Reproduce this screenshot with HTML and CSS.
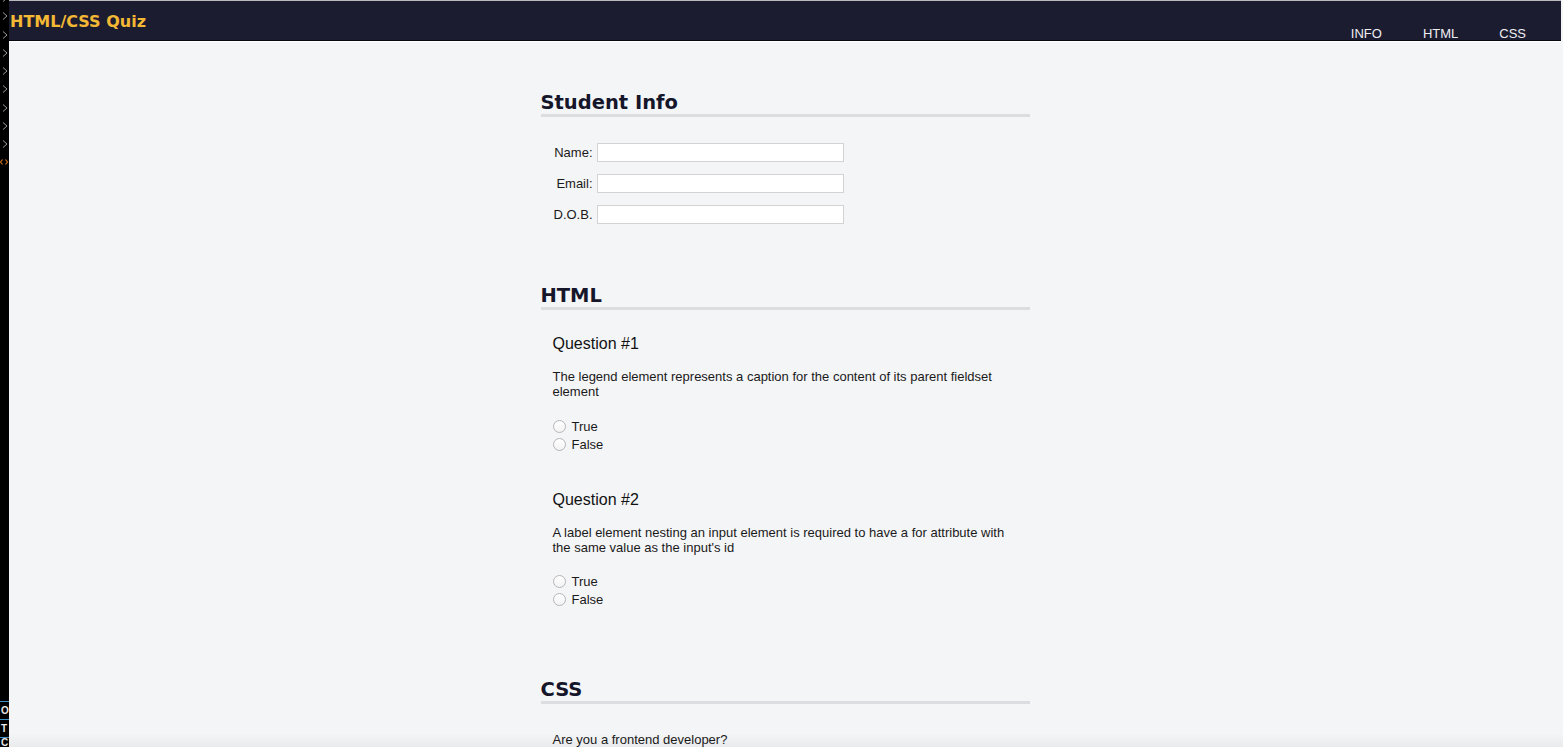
FILE: index.html
```html
<!DOCTYPE html>
<html lang="en">
<head>
<meta charset="utf-8">
<title>HTML/CSS Quiz</title>
<link rel="stylesheet" href="styles.css">
</head>
<body>
<aside class="gutter">
  <ul class="gutter-marks">
    <li class="mark"><svg width="6" height="8" viewBox="0 0 6 8"><polyline points="1,0.5 5,4 1,7.5" fill="none" stroke="#9a9a9a" stroke-width="1"/></svg></li>
    <li class="mark"><svg width="6" height="8" viewBox="0 0 6 8"><polyline points="1,0.5 5,4 1,7.5" fill="none" stroke="#9a9a9a" stroke-width="1"/></svg></li>
    <li class="mark"><svg width="6" height="8" viewBox="0 0 6 8"><polyline points="1,0.5 5,4 1,7.5" fill="none" stroke="#9a9a9a" stroke-width="1"/></svg></li>
    <li class="mark"><svg width="6" height="8" viewBox="0 0 6 8"><polyline points="1,0.5 5,4 1,7.5" fill="none" stroke="#9a9a9a" stroke-width="1"/></svg></li>
    <li class="mark"><svg width="6" height="8" viewBox="0 0 6 8"><polyline points="1,0.5 5,4 1,7.5" fill="none" stroke="#9a9a9a" stroke-width="1"/></svg></li>
    <li class="mark"><svg width="6" height="8" viewBox="0 0 6 8"><polyline points="1,0.5 5,4 1,7.5" fill="none" stroke="#9a9a9a" stroke-width="1"/></svg></li>
    <li class="mark"><svg width="6" height="8" viewBox="0 0 6 8"><polyline points="1,0.5 5,4 1,7.5" fill="none" stroke="#9a9a9a" stroke-width="1"/></svg></li>
    <li class="mark"><svg width="6" height="8" viewBox="0 0 6 8"><polyline points="1,0.5 5,4 1,7.5" fill="none" stroke="#9a9a9a" stroke-width="1"/></svg></li>
    <li class="mark"><svg width="6" height="8" viewBox="0 0 6 8"><polyline points="1,0.5 5,4 1,7.5" fill="none" stroke="#9a9a9a" stroke-width="1"/></svg></li>
    <li class="mark mark-tag"><svg width="8" height="6" viewBox="0 0 8 6"><polyline points="2.5,0.5 0.5,3 2.5,5.5" fill="none" stroke="#d4761c" stroke-width="1.2"/><polyline points="5.5,0.5 7.5,3 5.5,5.5" fill="none" stroke="#d4761c" stroke-width="1.2"/></svg></li>
  </ul>
  <ul class="gutter-tabs">
    <li class="tab">O</li>
    <li class="tab">T</li>
    <li class="tab tab-last">C</li>
  </ul>
</aside>

<div class="page">
  <header class="topbar">
    <h1 class="brand">HTML/CSS Quiz</h1>
    <nav class="nav">
      <a class="nav-link" href="#info">INFO</a>
      <a class="nav-link" href="#html">HTML</a>
      <a class="nav-link" href="#css">CSS</a>
    </nav>
  </header>

  <main class="quiz">
    <section class="section" id="info">
      <h2 class="section-title">Student Info</h2>
      <div class="info-grid">
        <label class="info-label" for="name">Name:</label>
        <input class="info-input" type="text" id="name">
        <label class="info-label" for="email">Email:</label>
        <input class="info-input" type="text" id="email">
        <label class="info-label" for="dob">D.O.B.</label>
        <input class="info-input" type="text" id="dob">
      </div>
    </section>

    <section class="section" id="html">
      <h2 class="section-title">HTML</h2>
      <div class="question">
        <h3 class="question-title">Question #1</h3>
        <p class="question-text">The legend element represents a caption for the content of its parent fieldset element</p>
        <div class="options">
          <label class="option"><input class="radio" type="radio" name="q1">True</label>
          <label class="option"><input class="radio" type="radio" name="q1">False</label>
        </div>
      </div>
      <div class="question">
        <h3 class="question-title">Question #2</h3>
        <p class="question-text">A label element nesting an input element is required to have a for attribute with the same value as the input's id</p>
        <div class="options">
          <label class="option"><input class="radio" type="radio" name="q2">True</label>
          <label class="option"><input class="radio" type="radio" name="q2">False</label>
        </div>
      </div>
    </section>

    <section class="section" id="css">
      <h2 class="section-title">CSS</h2>
      <p class="question-text intro">Are you a frontend developer?</p>
    </section>
  </main>
</div>
<div class="fade"></div>
</body>
</html>
```

FILE: styles.css
```css
* { box-sizing: border-box; }

html, body {
  margin: 0;
  padding: 0;
  height: 100%;
  overflow: hidden;
}

body {
  display: flex;
  background: #f4f5f7;
  font-family: "Liberation Sans", Arial, sans-serif;
  color: #1a1a1a;
}

/* left editor gutter */
.gutter {
  width: 9px;
  flex: 0 0 9px;
  height: 100vh;
  background: #000;
  display: flex;
  flex-direction: column;
  justify-content: space-between;
  overflow: hidden;
}

.gutter-marks {
  list-style: none;
  margin: -11px 0 0;
  padding: 0;
}

.mark {
  height: 18.25px;
  display: flex;
  align-items: center;
  padding-left: 2px;
}

.mark svg { display: block; }

.mark-tag { padding-left: 0; }

.gutter-tabs {
  list-style: none;
  margin: 0;
  padding: 0;
}

.tab {
  height: 18px;
  border-top: 1px solid #3d8fc4;
  color: #e6e6e6;
  font-size: 10px;
  font-weight: bold;
  line-height: 17px;
  padding-left: 1px;
  overflow: hidden;
}

.tab-last {
  height: 10px;
  line-height: 9px;
}

/* page */
.page {
  flex: 1;
  margin-right: 2px;
  min-width: 0;
}

.topbar {
  height: 41px;
  background: #1c1c31;
  border-top: 1px solid #b9b9bd;
  border-bottom: 1px solid #07070f;
  box-shadow: 0 1px 0 #ffffff;
  display: flex;
  justify-content: space-between;
}

.brand {
  margin: 0;
  padding: 11px 0 0 1px;
  font-family: "DejaVu Sans", Verdana, sans-serif;
  font-weight: bold;
  font-size: 16px;
  line-height: 19px;
  color: #f4b934;
}

.nav {
  display: flex;
  gap: 41px;
  padding: 26px 35px 0 0;
}

.nav-link {
  color: #eeeef2;
  text-decoration: none;
  font-size: 13px;
  line-height: 14px;
}

.quiz {
  width: 489px;
  margin: 0 auto;
  padding-top: 50px;
}

.section + .section { margin-top: 60px; }

.section-title {
  margin: 0;
  font-family: "DejaVu Sans", Verdana, sans-serif;
  font-weight: bold;
  font-size: 19.5px;
  line-height: 23px;
  color: #16162b;
  border-bottom: 3px solid #dcdde1;
}

.info-grid {
  display: grid;
  grid-template-columns: auto 247px;
  column-gap: 4px;
  row-gap: 12px;
  align-items: center;
  margin: 26px 0 0 13px;
  width: max-content;
}

.info-label {
  font-size: 13px;
  line-height: 15px;
  text-align: right;
  color: #1a1a1a;
}

.info-input {
  height: 19px;
  margin: 0;
  border: 1px solid #d3d3d6;
  background: #fff;
  padding: 0 3px;
  font-size: 13px;
  font-family: inherit;
}

.question {
  padding: 25px 12px 11px;
}

.question + .question { padding-top: 27px; }

.question:last-child { padding-bottom: 10px; }

.question-title {
  margin: 0;
  font-weight: normal;
  font-size: 16px;
  line-height: 18px;
  color: #111;
}

.question-text {
  margin: 16px 0 0;
  font-size: 13px;
  line-height: 15px;
  color: #1a1a1a;
}

.intro {
  margin-top: 28px;
  padding-left: 12px;
}

.options {
  margin-top: 18px;
  display: flex;
  flex-direction: column;
}

.question + .question .options { margin-top: 17px; }

.option {
  display: flex;
  align-items: center;
  height: 18px;
  font-size: 13px;
  color: #1a1a1a;
}

.radio {
  appearance: none;
  -webkit-appearance: none;
  width: 13px;
  height: 13px;
  margin: 0 6px 0 0;
  border: 1px solid #b6b6b9;
  border-radius: 50%;
  background: linear-gradient(#ffffff, #f3f3f3);
}

.fade {
  position: fixed;
  left: 9px;
  right: 0;
  bottom: 0;
  height: 14px;
  background: linear-gradient(rgba(0, 0, 0, 0), rgba(0, 0, 0, 0.04));
  pointer-events: none;
}
```
